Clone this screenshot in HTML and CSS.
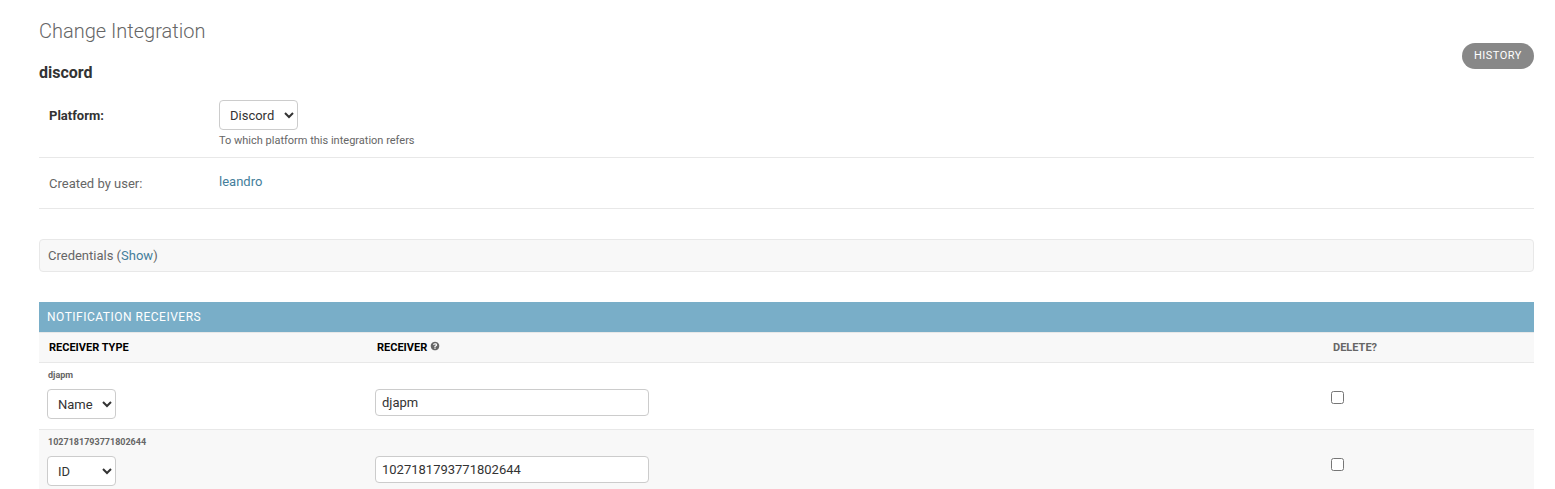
FILE: index.html
```html
<!DOCTYPE html>
<html lang="en">
<head>
<meta charset="utf-8">
<title>Change Integration</title>
<link rel="stylesheet" href="styles.css">
</head>
<body>
<main class="content">
  <h1>Change Integration</h1>
  <header class="object-header">
    <h2>discord</h2>
    <a class="history">HISTORY</a>
  </header>
  <form>
    <div class="form-row platform-row">
      <label class="required" for="platform">Platform:</label>
      <div class="field">
        <select id="platform"><option>Discord</option></select>
        <div class="help">To which platform this integration refers</div>
      </div>
    </div>
    <div class="form-row user-row">
      <label>Created by user:</label>
      <a class="link">leandro</a>
    </div>
    <section class="credentials">Credentials (<a class="link">Show</a>)</section>
    <section class="inline-group">
      <h3>NOTIFICATION RECEIVERS</h3>
      <div class="row head">
        <span>RECEIVER TYPE</span>
        <span>RECEIVER <svg class="help-icon" viewBox="0 0 1792 1792"><path fill="#666" d="M1024 1376v-192q0-14-9-23t-23-9h-192q-14 0-23 9t-9 23v192q0 14 9 23t23 9h192q14 0 23-9t9-23zm256-672q0-88-55.500-163t-138.500-116-170-41q-243 0-371 213-15 24 8 42l132 100q7 6 19 6 16 0 25-12 53-68 86-92 34-24 86-24 48 0 85.500 26t37.500 59q0 38-20 61t-68 45q-63 28-115.500 86.500t-52.500 125.500v36q0 14 9 23t23 9h192q14 0 23-9t9-23q0-19 21.500-49.500t54.500-49.500q32-18 49-28.500t46-35 44.500-48 28-60.500 12.500-81zm384 192q0 209-103 385.500t-279.500 279.500-385.500 103-385.500-103-279.500-279.500-103-385.500 103-385.500 279.500-279.500 385.500-103 385.500 103 279.500 279.500 103 385.500z"/></svg></span>
        <span class="delete-title">DELETE?</span>
      </div>
      <div class="row item">
        <p class="original">djapm</p>
        <div><select class="type"><option>Name</option><option>ID</option></select></div>
        <div><input class="text" type="text" value="djapm"></div>
        <div><input class="check" type="checkbox"></div>
      </div>
      <div class="row item alt">
        <p class="original">1027181793771802644</p>
        <div><select class="type"><option>Name</option><option selected>ID</option></select></div>
        <div><input class="text" type="text" value="1027181793771802644"></div>
        <div><input class="check" type="checkbox"></div>
      </div>
    </section>
  </form>
</main>
</body>
</html>
```
FILE: styles.css
```css
* { box-sizing: border-box; }
html { overflow: hidden; }
body {
  margin: 0;
  background: #fff;
  color: #333;
  font: 13px/17px Roboto, "Noto Sans", sans-serif;
}
.content { padding: 20px 21px 0 39px; }
h1, h2, h3, p { margin: 0; }
h1 { height: 23px; color: #666; font-size: 20px; font-weight: 300; line-height: 22px; }
.object-header { display: flex; justify-content: space-between; height: 47px; }
h2 { margin-top: 20px; font-size: 16px; font-weight: 700; line-height: 19px; }
.history {
  width: 72px;
  height: 26px;
  border-radius: 15px;
  background: #888;
  color: #fff;
  font-size: 11px;
  letter-spacing: 0.5px;
  line-height: 25px;
  text-align: center;
}
.link { color: #417893; text-decoration: none; }
.form-row { display: flex; padding: 10px; border-bottom: 1px solid #e8e8e8; }
.form-row label { width: 170px; color: #666; }
.form-row .required { padding-top: 7px; color: #333; font-weight: 700; }
.platform-row { height: 68px; }
.user-row { height: 51px; padding-top: 15px; }
.user-row label { padding-top: 2px; }
select, .text {
  margin: 0;
  border: 1px solid #ccc;
  border-radius: 4px;
  background-color: #fff;
  color: #333;
  font: 13px Roboto, sans-serif;
}
select { display: block; width: 79px; height: 30px; padding: 0 6px; }
.help { margin-top: 4px; color: #666; font-size: 11px; line-height: 14px; }
.credentials {
  height: 33px;
  margin-top: 30px;
  padding: 7px 8px;
  border: 1px solid #e8e8e8;
  border-radius: 4px;
  background: #f8f8f8;
  color: #666;
}
.link { color: #447e9b; }
.inline-group { margin-top: 30px; }
h3 {
  height: 30px;
  padding: 0 8px;
  background: #79aec8;
  color: #fff;
  font-size: 12px;
  font-weight: 400;
  letter-spacing: 0.5px;
  line-height: 30px;
}
.row { display: grid; grid-template-columns: 328px 956px 1fr; padding: 0 8px; border-bottom: 1px solid #e8e8e8; }
.head { height: 31px; padding: 0 10px; border-top: 1px solid #e8e8e8; background: #f8f8f8; color: #000; font-size: 11px; font-weight: 700; line-height: 29px; }
.delete-title { color: #666; }
.help-icon { width: 10px; height: 10px; vertical-align: 0; }
.item { grid-template-rows: 26px 40px; height: 67px; }
.alt { background: #f8f8f8; }
.original { grid-column: 1 / -1; padding: 5px 1px 0; color: #666; font-size: 9px; font-weight: 700; line-height: 15px; }
.type { width: 69px; }
.text { display: block; width: 274px; height: 27px; padding: 0 6px; }
.check { display: block; width: 13px; height: 13px; margin: 2px 0 0; }
```
